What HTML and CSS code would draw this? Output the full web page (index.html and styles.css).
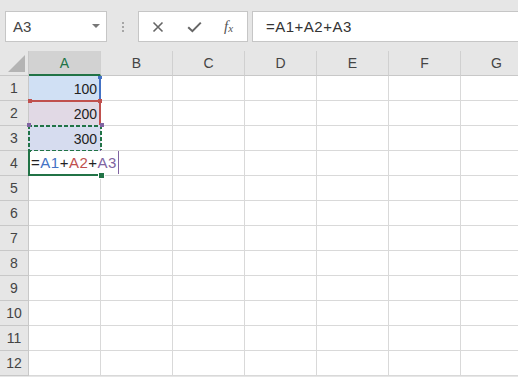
FILE: index.html
```html
<!DOCTYPE html>
<html lang="ja">
<head>
    <meta charset="UTF-8">
    <title>Sheet1</title>
    <link rel="stylesheet" href="styles.css">
</head>
<body>
    <div class="toolbar">
        <div class="namebox">
            <span>A3</span>
            <span class="drop"></span>
        </div>
        <div class="grip"><i></i><i></i><i></i></div>
        <div class="fx-buttons">
            <svg class="ico" width="12" height="12" viewBox="0 0 12 12">
                <path d="M1.5 1.5 L10.5 10.5 M10.5 1.5 L1.5 10.5" stroke="#666" stroke-width="1.6" fill="none"/>
            </svg>
            <svg class="ico" width="15" height="12" viewBox="0 0 15 12">
                <path d="M1.2 6.2 L5.4 10.2 L13.8 1.6" stroke="#666" stroke-width="2" fill="none"/>
            </svg>
            <span class="fx">f<sub>x</sub></span>
        </div>
        <div class="formula">=A1+A2+A3</div>
    </div>

    <div class="sheet">
        <div class="hd corner"><span class="tri"></span></div>
        <div class="hd col sel">A</div>
        <div class="hd col">B</div>
        <div class="hd col">C</div>
        <div class="hd col">D</div>
        <div class="hd col">E</div>
        <div class="hd col">F</div>
        <div class="hd col">G</div>

        <div class="hd row">1</div>
        <div class="cell num ref-a1">100</div>
        <div class="cell"></div><div class="cell"></div><div class="cell"></div><div class="cell"></div><div class="cell"></div><div class="cell"></div>

        <div class="hd row">2</div>
        <div class="cell num ref-a2">200</div>
        <div class="cell"></div><div class="cell"></div><div class="cell"></div><div class="cell"></div><div class="cell"></div><div class="cell"></div>

        <div class="hd row">3</div>
        <div class="cell num ref-a3">300</div>
        <div class="cell"></div><div class="cell"></div><div class="cell"></div><div class="cell"></div><div class="cell"></div><div class="cell"></div>

        <div class="hd row">4</div>
        <div class="cell editing">
            <span class="edit">=<span class="c1">A1</span>+<span class="c2">A2</span>+<span class="c3">A3</span></span>
        </div>
        <div class="cell"></div><div class="cell"></div><div class="cell"></div><div class="cell"></div><div class="cell"></div><div class="cell"></div>

        <div class="hd row">5</div>
        <div class="cell"></div><div class="cell"></div><div class="cell"></div><div class="cell"></div><div class="cell"></div><div class="cell"></div><div class="cell"></div>
        <div class="hd row">6</div>
        <div class="cell"></div><div class="cell"></div><div class="cell"></div><div class="cell"></div><div class="cell"></div><div class="cell"></div><div class="cell"></div>
        <div class="hd row">7</div>
        <div class="cell"></div><div class="cell"></div><div class="cell"></div><div class="cell"></div><div class="cell"></div><div class="cell"></div><div class="cell"></div>
        <div class="hd row">8</div>
        <div class="cell"></div><div class="cell"></div><div class="cell"></div><div class="cell"></div><div class="cell"></div><div class="cell"></div><div class="cell"></div>
        <div class="hd row">9</div>
        <div class="cell"></div><div class="cell"></div><div class="cell"></div><div class="cell"></div><div class="cell"></div><div class="cell"></div><div class="cell"></div>
        <div class="hd row">10</div>
        <div class="cell"></div><div class="cell"></div><div class="cell"></div><div class="cell"></div><div class="cell"></div><div class="cell"></div><div class="cell"></div>
        <div class="hd row">11</div>
        <div class="cell"></div><div class="cell"></div><div class="cell"></div><div class="cell"></div><div class="cell"></div><div class="cell"></div><div class="cell"></div>
        <div class="hd row">12</div>
        <div class="cell"></div><div class="cell"></div><div class="cell"></div><div class="cell"></div><div class="cell"></div><div class="cell"></div><div class="cell"></div>
    </div>
</body>
</html>
```

FILE: styles.css
```css
body {
    margin: 0;
    width: 518px;
    height: 377px;
    overflow: hidden;
    background: #e6e6e6;
    font-family: "Liberation Sans", Arial, sans-serif;
    color: #333;
}

/* formula bar */
.toolbar {
    height: 51px;
    box-sizing: border-box;
    padding-top: 11px;
    display: flex;
    align-items: flex-start;
}
.namebox {
    margin-left: 5px;
    width: 102px;
    height: 31px;
    box-sizing: border-box;
    border: 1px solid #c6c6c6;
    background: white;
    display: flex;
    align-items: center;
    justify-content: space-between;
    padding: 0 6px 0 7px;
    font-size: 15px;
    color: #444;
}
.drop {
    width: 0;
    height: 0;
    border-left: 4px solid transparent;
    border-right: 4px solid transparent;
    border-top: 4px solid #777;
    margin-top: -2px;
}
.grip {
    width: 31px;
    height: 31px;
    display: flex;
    flex-direction: column;
    align-items: center;
    justify-content: center;
    gap: 2px;
}
.grip i {
    display: block;
    width: 2px;
    height: 2px;
    background: #a6a6a6;
}
.fx-buttons {
    width: 110px;
    height: 31px;
    box-sizing: border-box;
    border: 1px solid #c6c6c6;
    background: white;
    display: flex;
    align-items: center;
    padding-left: 13px;
}
.fx-buttons .ico:first-child {
    margin-right: 23px;
}
.fx-buttons .ico + .ico {
    margin-right: 22px;
}
.fx {
    font-family: "Liberation Serif", "Times New Roman", serif;
    font-style: italic;
    font-size: 15px;
    color: #555;
}
.fx sub {
    font-size: 11px;
    vertical-align: -1px;
}
.formula {
    flex: 1;
    margin-left: 4px;
    height: 31px;
    box-sizing: border-box;
    border: 1px solid #c6c6c6;
    border-right: none;
    background: white;
    padding-left: 13px;
    line-height: 29px;
    font-size: 15px;
    letter-spacing: 0.5px;
    color: #333;
}

/* grid */
.sheet {
    display: grid;
    grid-template-columns: 29px repeat(7, 72px);
    grid-auto-rows: 25px;
    background: white;
}
.hd {
    background: #e6e6e6;
    border-right: 1px solid #c8c8c8;
    border-bottom: 1px solid #c8c8c8;
    box-sizing: border-box;
    display: flex;
    align-items: center;
    justify-content: center;
    font-size: 14px;
    color: #444;
}
.hd.col {
    border-right-color: #d0d0d0;
}
.hd.sel {
    background: #d2d2d2;
    color: #217346;
    border-bottom: 2px solid #217346;
}
.corner {
    position: relative;
}
.tri {
    position: absolute;
    right: 3px;
    bottom: 3px;
    width: 0;
    height: 0;
    border-left: 17px solid transparent;
    border-bottom: 17px solid #b4b4b4;
}
.cell {
    position: relative;
    border-right: 1px solid #d9d9d9;
    border-bottom: 1px solid #d9d9d9;
    box-sizing: border-box;
    font-size: 14px;
    color: #222;
}
.num {
    display: flex;
    align-items: center;
    justify-content: flex-end;
    padding-right: 2px;
    padding-top: 1px;
}

/* reference ranges */
.ref-a1 {
    background: #d0e0f4;
    border-right: 2px solid #4472c4;
}
.ref-a1::after {
    content: "";
    position: absolute;
    right: -3px;
    top: 0;
    width: 4px;
    height: 3px;
    background: #4472c4;
}
.ref-a2 {
    background: #e1d9e5;
    border-top: 2px solid #c0504d;
    border-right: 2px solid #c0504d;
    margin-top: -1px;
}
.ref-a2::before,
.ref-a2::after {
    content: "";
    position: absolute;
    top: -3px;
    width: 4px;
    height: 4px;
    background: #c0504d;
}
.ref-a2::before { left: -1px; }
.ref-a2::after { right: -3px; }

.ref-a3 {
    background: #d6dcef;
    border: none;
    margin-top: -1px;
    margin-left: -1px;
    padding-right: 4px;
}
.ref-a3::before {
    content: "";
    position: absolute;
    inset: 0 -1px -1px 0;
    background:
        repeating-linear-gradient(90deg, #217346 0 4px, transparent 4px 6px) top / 100% 2px no-repeat,
        repeating-linear-gradient(90deg, #217346 0 4px, transparent 4px 6px) bottom / 100% 2px no-repeat,
        repeating-linear-gradient(180deg, #217346 0 4px, transparent 4px 6px) left / 2px 100% no-repeat,
        repeating-linear-gradient(180deg, #217346 0 4px, transparent 4px 6px) right / 2px 100% no-repeat;
}
.ref-a3::after {
    content: "";
    position: absolute;
    left: -1px;
    right: -3px;
    top: -2px;
    bottom: -3px;
    background:
        linear-gradient(#8064a2, #8064a2) left top / 4px 4px no-repeat,
        linear-gradient(#8064a2, #8064a2) right top / 4px 4px no-repeat,
        linear-gradient(#8064a2, #8064a2) right bottom / 4px 4px no-repeat;
}

/* cell being edited */
.editing {
    border: none;
    margin-left: -1px;
    border-left: 2px solid #217346;
    border-bottom: 2px solid #217346;
    z-index: 2;
}
.editing::after {
    content: "";
    position: absolute;
    right: -3px;
    bottom: -4px;
    width: 5px;
    height: 5px;
    background: #217346;
    border: 1px solid white;
    box-sizing: content-box;
    margin: -1px;
}
.edit {
    position: absolute;
    left: 1px;
    top: 0;
    height: 23px;
    display: flex;
    align-items: center;
    padding-right: 1px;
    border-right: 1px solid #8064a2;
    background: white;
    white-space: nowrap;
    font-size: 15px;
    letter-spacing: 0.5px;
    color: #222;
}
.c1 { color: #4472c4; }
.c2 { color: #c0504d; }
.c3 { color: #8064a2; }
```
